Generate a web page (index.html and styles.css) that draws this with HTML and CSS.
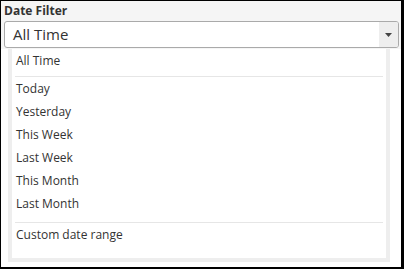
FILE: index.html
```html
<!DOCTYPE html>
<html lang="en">
<head>
    <meta charset="UTF-8">
    <meta name="viewport" content="width=device-width, initial-scale=1.0">
    <title>Date Filter</title>
    <link rel="stylesheet" href="styles.css">
</head>
<body>
    <div class="frame">
        <div class="filter-head">
            <div class="filter-label">Date Filter</div>
            <div class="select">
                <span class="select-value">All Time</span>
                <span class="select-arrow">
                    <svg width="7" height="4" viewBox="0 0 7 4"><path d="M0 0H7L3.5 4Z" fill="#444"/></svg>
                </span>
            </div>
        </div>
        <ul class="options">
            <li class="option">All Time</li>
            <li class="sep"></li>
            <li class="option">Today</li>
            <li class="option">Yesterday</li>
            <li class="option">This Week</li>
            <li class="option">Last Week</li>
            <li class="option">This Month</li>
            <li class="option">Last Month</li>
            <li class="sep sep-wide"></li>
            <li class="option">Custom date range</li>
        </ul>
    </div>
</body>
</html>
```

FILE: styles.css
```css
/* General */
body {
    margin: 0;
    background-color: #fff;
    font-family: "Open Sans", "Noto Sans", sans-serif;
    color: #333;
}

.frame {
    width: 400px;
    height: 266px;
    border-style: solid;
    border-color: #000;
    border-width: 1px 3px 2px 1px;
    display: flex;
    flex-direction: column;
}

/* Header with select */
.filter-head {
    background-color: #f5f5f5;
    padding: 2px 2px 1px 3px;
}

.filter-label {
    font-size: 12px;
    font-weight: bold;
    line-height: 16px;
    margin-bottom: 2px;
}

.select {
    display: flex;
    height: 25px;
    border: 1px solid #aaa;
    border-radius: 3px;
    background-color: #fff;
}

.select-value {
    flex: 1;
    font-size: 15px;
    line-height: 25px;
    padding-left: 8px;
}

.select-arrow {
    width: 19px;
    background-color: #eee;
    border-radius: 0 2px 2px 0;
    display: flex;
    justify-content: center;
    align-items: center;
}

/* Dropdown list */
.options {
    list-style: none;
    margin: 0 11px 6px 7px;
    padding: 0 0 12px;
    border: 4px solid #eee;
    border-top: 0;
    flex: 1;
    background-color: #fff;
}

.option {
    font-size: 12px;
    line-height: 23px;
    padding-left: 4px;
}

.sep {
    height: 1px;
    margin: 4px 3px 0;
    background-color: #e6e6e6;
}

.sep-wide {
    margin-top: 7px;
}
```
